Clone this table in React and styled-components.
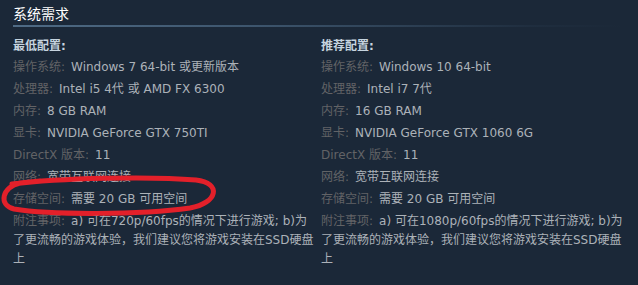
import React from 'react';
import styled, { createGlobalStyle } from 'styled-components';

const Global = createGlobalStyle`
  html, body {
    margin: 0;
    padding: 0;
    background: #1b2838;
  }
  body {
    font-family: "DejaVu Sans", Arial, "Noto Sans CJK SC", sans-serif;
  }
`;

const minReq = [
  ['操作系统:', 'Windows 7 64-bit 或更新版本'],
  ['处理器:', 'Intel i5 4代 或 AMD FX 6300'],
  ['内存:', '8 GB RAM'],
  ['显卡:', 'NVIDIA GeForce GTX 750TI'],
  ['DirectX 版本:', '11'],
  ['网络:', '宽带互联网连接'],
  ['存储空间:', '需要 20 GB 可用空间'],
  ['附注事项:', 'a) 可在720p/60fps的情况下进行游戏; b)为了更流畅的游戏体验，我们建议您将游戏安装在SSD硬盘上'],
];

const recReq = [
  ['操作系统:', 'Windows 10 64-bit'],
  ['处理器:', 'Intel i7 7代'],
  ['内存:', '16 GB RAM'],
  ['显卡:', 'NVIDIA GeForce GTX 1060 6G'],
  ['DirectX 版本:', '11'],
  ['网络:', '宽带互联网连接'],
  ['存储空间:', '需要 20 GB 可用空间'],
  ['附注事项:', 'a) 可在1080p/60fps的情况下进行游戏; b)为了更流畅的游戏体验，我们建议您将游戏安装在SSD硬盘上'],
];

const Page = styled.div`
  position: relative;
  width: 638px;
  height: 285px;
  overflow: hidden;
  padding: 5px 0 0 13px;
  box-sizing: border-box;
`;

const Title = styled.h2`
  margin: 0;
  font-size: 14px;
  font-weight: normal;
  color: #ffffff;
  line-height: 18px;
  width: 610px;
  background-image: linear-gradient(to right, #4f6b85 0%, #3d556d 40%, rgba(40, 58, 78, 0.3) 85%, rgba(27, 40, 56, 0) 100%);
  background-size: 100% 2px;
  background-position: bottom;
  background-repeat: no-repeat;
  padding-bottom: 4px;
`;

const Columns = styled.div`
  display: grid;
  grid-template-columns: 302px 304px;
  column-gap: 6px;
  margin-top: 11px;
`;

const Heading = styled.div`
  font-size: 12px;
  color: #c6d4df;
  font-weight: bold;
  line-height: 17px;
  margin-bottom: 3px;
`;

const List = styled.ul`
  list-style: none;
  margin: 0;
  padding: 0;
`;

const Item = styled.li`
  font-size: 12px;
  line-height: 19px;
  color: #acb2b8;
  margin-bottom: 3px;
`;

const Label = styled.span`
  color: #626366;
  margin-right: 6px;
`;

const Mark = styled.svg`
  position: absolute;
  left: 0;
  top: 173px;
  pointer-events: none;
`;

function ReqColumn({ heading, rows }) {
  return (
    <div>
      <Heading>{heading}</Heading>
      <List>
        {rows.map(([k, v]) => (
          <Item key={k}>
            <Label>{k}</Label>
            {v}
          </Item>
        ))}
      </List>
    </div>
  );
}

export default function App() {
  return (
    <>
      <Global />
      <Page>
        <Title>系统需求</Title>
        <Columns>
          <ReqColumn heading="最低配置:" rows={minReq} />
          <ReqColumn heading="推荐配置:" rows={recReq} />
        </Columns>
        <Mark width="230" height="44" viewBox="0 0 230 44">
          <path
            d="M12 11 C 60 5, 150 3, 196 7 C 222 10, 218 30, 190 35 C 140 42, 50 42, 14 36 C -2 32, 2 14, 20 10 L 40 8"
            fill="none"
            stroke="#e3202a"
            strokeWidth="5"
            strokeLinecap="round"
          />
        </Mark>
      </Page>
    </>
  );
}
